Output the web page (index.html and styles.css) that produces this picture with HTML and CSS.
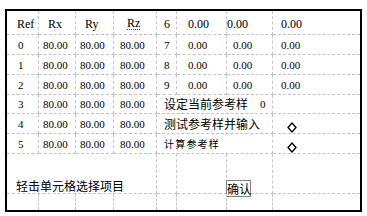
FILE: index.html
```html
<!DOCTYPE html>
<html lang="zh-CN">
<head>
  <meta charset="UTF-8">
  <title>参考样</title>
  <link rel="stylesheet" href="styles.css">
</head>
<body>
<div class="sheet">
  <!-- header row -->
  <div class="cell hd k0">Ref</div>
  <div class="cell hd k1 h1">Rx</div>
  <div class="cell hd k2 h1">Ry</div>
  <div class="cell hd k3 h3"><span class="typo">Rz</span></div>
  <div class="cell hd k4">6</div>
  <div class="cell hd k5">0.00</div>
  <div class="cell hd k6 h6">0.00</div>
  <div class="cell hd k7 last">0.00</div>

  <div class="cell k0">0</div>
  <div class="cell k1">80.00</div>
  <div class="cell k2">80.00</div>
  <div class="cell k3">80.00</div>
  <div class="cell k4">7</div>
  <div class="cell k5">0.00</div>
  <div class="cell k6">0.00</div>
  <div class="cell k7 last">0.00</div>

  <div class="cell k0">1</div>
  <div class="cell k1">80.00</div>
  <div class="cell k2">80.00</div>
  <div class="cell k3">80.00</div>
  <div class="cell k4">8</div>
  <div class="cell k5">0.00</div>
  <div class="cell k6">0.00</div>
  <div class="cell k7 last">0.00</div>

  <div class="cell k0">2</div>
  <div class="cell k1">80.00</div>
  <div class="cell k2">80.00</div>
  <div class="cell k3">80.00</div>
  <div class="cell k4">9</div>
  <div class="cell k5">0.00</div>
  <div class="cell k6">0.00</div>
  <div class="cell k7 last">0.00</div>

  <div class="cell k0">3</div>
  <div class="cell k1">80.00</div>
  <div class="cell k2">80.00</div>
  <div class="cell k3">80.00</div>
  <div class="cell k4 wide cn">设定当前参考样<span class="ref-no">0</span></div>
  <div class="cell k7 last"></div>

  <div class="cell k0">4</div>
  <div class="cell k1">80.00</div>
  <div class="cell k2">80.00</div>
  <div class="cell k3">80.00</div>
  <div class="cell k4 wide cn">测试参考样并输入</div>
  <div class="cell k7 last">
    <svg class="mark" width="10" height="11" viewBox="0 0 10 11"><path d="M5 1 L9 5.5 L5 10 L1 5.5 Z" fill="none" stroke="#000" stroke-width="1.3"/></svg>
  </div>

  <div class="cell k0">5</div>
  <div class="cell k1">80.00</div>
  <div class="cell k2">80.00</div>
  <div class="cell k3">80.00</div>
  <div class="cell k4 wide cn small">计算参考样</div>
  <div class="cell k7 last">
    <svg class="mark" width="10" height="11" viewBox="0 0 10 11"><path d="M5 1 L9 5.5 L5 10 L1 5.5 Z" fill="none" stroke="#000" stroke-width="1.3"/></svg>
  </div>

  <!-- status row -->
  <div class="cell hint cn">轻击单元格选择项目</div>
  <div class="cell"></div>
  <div class="cell"></div>
  <div class="cell btn-cell"><button class="ok cn">确认</button></div>
  <div class="cell last"></div>

  <div class="cell end"></div>
  <div class="cell end"></div>
  <div class="cell end"></div>
  <div class="cell end"></div>
  <div class="cell end"></div>
  <div class="cell end"></div>
  <div class="cell end"></div>
  <div class="cell end last"></div>
</div>
</body>
</html>
```

FILE: styles.css
```css
* { margin: 0; padding: 0; box-sizing: border-box; }
body { background: #fff; color: #000; font-family: 'Liberation Serif', serif; }

/* sheet grid */
.sheet {
  display: grid;
  grid-template-columns: 32px 37px 38px 43px 20px 50px 46px 87px;
  grid-template-rows: 24px 20px 20px 20px 19px 20px 20px 40px 16px;
  width: 357px;
  margin: 9px 0 0 5px;
  border: 2px solid #000;
}
.cell {
  display: flex;
  align-items: center;
  font-size: 11px;
  line-height: 12px;
  white-space: nowrap;
  border-right: 1px dashed #c4c4c4;
  border-bottom: 1px dashed #c4c4c4;
}
.cell.last { border-right: none; }
.cell.end { border-bottom: none; }

/* column text offsets */
.k0 { padding-left: 11px; }
.k1 { padding-left: 4px; }
.k2 { padding-left: 4px; }
.k3 { padding-left: 6px; }
.k4 { padding-left: 7px; }
.k5 { padding-left: 11px; }
.k6 { padding-left: 6px; }
.k7 { padding-left: 8px; }

.hd { font-size: 12px; padding-top: 2px; }
.hd.k0 { padding-left: 10px; }
.hd.h1 { padding-left: 9px; }
.hd.h3 { padding-left: 13px; }
.hd.h6 { padding-left: 0; }
.typo { border-bottom: 1px dotted #e00; padding-bottom: 0; line-height: 12px; }

.cn { font-family: 'Noto Sans CJK SC', sans-serif; font-size: 12px; }
.wide { grid-column: span 3; }
.small { font-size: 10px; letter-spacing: 1.2px; }
.ref-no { font-family: 'Liberation Serif', serif; font-size: 11px; margin-left: 12px; }
.mark { margin: 8px 0 0 6px; }

/* bottom status row */
.hint {
  grid-column: span 4;
  align-items: flex-end;
  padding-left: 9px;
  padding-bottom: 0;
  line-height: 14px;
}
.btn-cell { align-items: flex-end; }
.ok {
  width: 25px;
  height: 17px;
  margin: 0 0 -4px -1px;
  border: 1px solid #808080;
  background: #fff;
  color: #000;
  font-size: 12px;
  line-height: 14px;
  padding: 0;
}
```
